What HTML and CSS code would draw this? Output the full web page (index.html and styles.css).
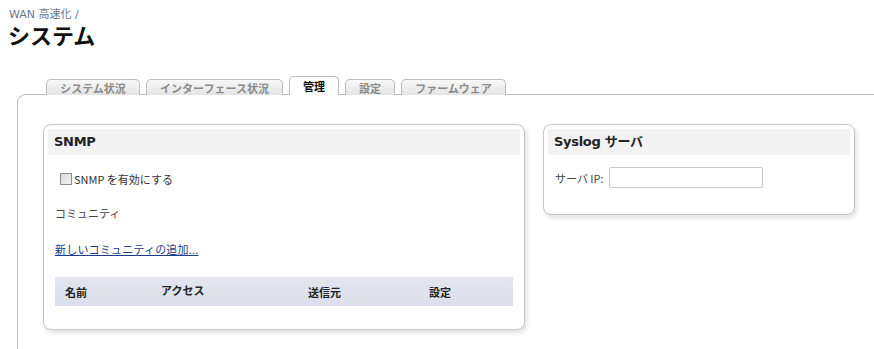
FILE: index.html
```html
<!DOCTYPE html>
<html lang="ja">
<head>
<meta charset="utf-8">
<link rel="stylesheet" href="styles.css">
</head>
<body>
<div class="page">
  <div class="crumb">WAN 高速化 /</div>
  <h1 class="title">システム</h1>
  <div class="tabs">
    <div class="tab">システム状況</div>
    <div class="tab">インターフェース状況</div>
    <div class="tab active">管理</div>
    <div class="tab">設定</div>
    <div class="tab">ファームウェア</div>
  </div>
  <div class="panel">
    <div class="box snmp">
      <div class="box-head">SNMP</div>
      <div class="box-body">
        <label class="check-row"><input type="checkbox" class="check"><span>SNMP を有効にする</span></label>
        <div class="section">コミュニティ</div>
        <a class="link" href="#">新しいコミュニティの追加...</a>
        <div class="thead">
          <div>名前</div>
          <div class="up">アクセス</div>
          <div>送信元</div>
          <div>設定</div>
        </div>
      </div>
    </div>
    <div class="box syslog">
      <div class="box-head">Syslog サーバ</div>
      <div class="field">
        <span>サーバ IP:</span>
        <input type="text" class="text-input">
      </div>
    </div>
  </div>
</div>
</body>
</html>
```

FILE: styles.css
```css
html, body {
  margin: 0;
  padding: 0;
  background: #fff;
}
body {
  font-family: "Noto Sans CJK JP", "DejaVu Sans", sans-serif;
  font-size: 11px;
  color: #333;
}
.page {
  display: flex;
  flex-direction: column;
  padding-top: 7px;
}
.crumb {
  padding-left: 9px;
  font-family: "DejaVu Sans", "Noto Sans CJK JP", sans-serif;
  font-size: 11px;
  line-height: 16px;
  color: #6b7590;
}
.title {
  margin: 1px 0 0 0;
  padding-left: 8px;
  font-family: "DejaVu Sans", "Noto Sans CJK JP", sans-serif;
  font-size: 22px;
  line-height: 26px;
  font-weight: bold;
  color: #111;
}
.tabs {
  display: flex;
  align-items: flex-end;
  gap: 6px;
  margin-top: 26px;
  margin-left: 46px;
  height: 19px;
  margin-bottom: -1px;
  position: relative;
  z-index: 1;
}
.tab {
  height: 15px;
  padding: 0 12px;
  border: 1px solid #bdbdbd;
  border-bottom: none;
  border-radius: 5px 5px 0 0;
  background: linear-gradient(#f8f8f8, #e4e4e4);
  color: #8a8a8a;
  font-weight: bold;
  line-height: 16px;
  text-align: center;
}
.tab:nth-child(1) { width: 68px; }
.tab:nth-child(2) { width: 111px; }
.tab:nth-child(3) { width: 24px; }
.tab:nth-child(4) { width: 24px; }
.tab:nth-child(5) { width: 79px; }
.tab.active {
  height: 18px;
  background: #fff;
  color: #111;
  line-height: 18px;
}
.panel {
  margin-left: 17px;
  border-top: 1px solid #bdbdbd;
  border-left: 1px solid #bdbdbd;
  border-top-left-radius: 9px;
  display: flex;
  align-items: flex-start;
  gap: 18px;
  padding: 29px 0 20px 25px;
}
.box {
  border: 1px solid #c6c6c6;
  border-radius: 8px;
  box-shadow: 2px 3px 5px rgba(0, 0, 0, 0.12);
  background: #fff;
  padding: 4px 4px 0 4px;
}
.snmp {
  width: 472px;
  height: 200px;
}
.syslog {
  width: 302px;
  height: 85px;
}
.box-head {
  height: 26px;
  background: #f3f3f3;
  padding-left: 6px;
  font-family: "DejaVu Sans", "Noto Sans CJK JP", sans-serif;
  font-size: 13px;
  font-weight: bold;
  line-height: 26px;
  color: #222;
  letter-spacing: -0.3px;
}
.box-body {
  display: flex;
  flex-direction: column;
  padding: 0 7px 0 7px;
}
.check-row {
  display: flex;
  align-items: center;
  gap: 2px;
  margin-top: 16px;
  margin-left: 5px;
  height: 16px;
  line-height: 16px;
}
.check {
  appearance: none;
  -webkit-appearance: none;
  margin: 0;
  width: 12px;
  height: 12px;
  border: 1px solid #8e8e8e;
  background: linear-gradient(135deg, #d8d8d8, #f4f4f4);
  box-sizing: border-box;
}
.section {
  margin-top: 18px;
  line-height: 16px;
  color: #444;
}
.link {
  margin-top: 20px;
  line-height: 16px;
  color: #1f3a8a;
  text-decoration: underline;
  align-self: flex-start;
  letter-spacing: 0.2px;
}
.thead {
  margin-top: 20px;
  height: 29px;
  background: linear-gradient(#e3e6ef, #dcdfeb);
  display: grid;
  grid-template-columns: 96px 147px 121px 1fr;
  padding-left: 10px;
  align-items: center;
  font-weight: bold;
  color: #222;
}
.thead .up {
  margin-top: -4px;
}
.field {
  display: flex;
  align-items: center;
  gap: 5px;
  margin-top: 12px;
  padding-left: 7px;
  color: #444;
}
.text-input {
  width: 154px;
  height: 21px;
  box-sizing: border-box;
  border: 1px solid #c9c9c9;
  border-radius: 2px;
  margin: 0;
}
```
